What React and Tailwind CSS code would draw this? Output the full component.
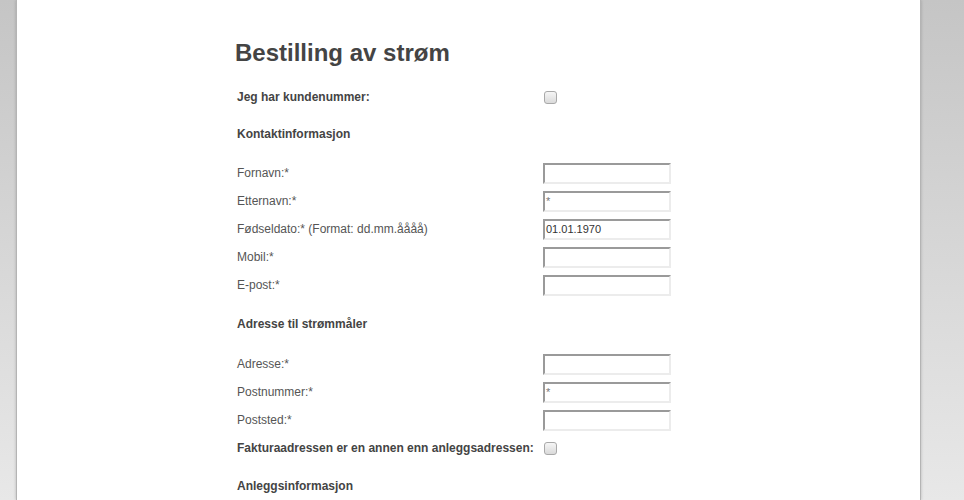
import React from 'react';

const font = { fontFamily: '"Liberation Sans", Arial, sans-serif' };

function TextInput({ value, hint }) {
  return (
    <div className="w-[128px] h-[21px] border-2 border-t-[#9a9a9a] border-l-[#9a9a9a] border-b-[#ececec] border-r-[#ececec] bg-white flex items-center px-[1px]">
      {value && <span className="text-[11px] text-[#333] leading-none">{value}</span>}
      {hint && <span className="text-[11px] text-[#777] leading-none self-start mt-[3px]">*</span>}
    </div>
  );
}

function Checkbox() {
  return (
    <span className="ml-[1px] block w-[13px] h-[13px] rounded-[3px] border border-[#a9a9a9] bg-gradient-to-b from-[#f6f6f6] to-[#dadada]" />
  );
}

function FieldRow({ label, value, hint }) {
  return (
    <div className="flex items-center h-[28px]">
      <span className="w-[306px] text-[12px] text-[#555]">{label}</span>
      <TextInput value={value} hint={hint} />
    </div>
  );
}

function CheckRow({ label }) {
  return (
    <div className="flex items-center h-[28px]">
      <span className="w-[306px] text-[12px] font-bold text-[#444] pr-2 whitespace-nowrap">{label}</span>
      <Checkbox />
    </div>
  );
}

function Heading({ children, className }) {
  return (
    <div className={`flex items-center h-[28px] text-[12px] font-bold text-[#444] ${className}`}>
      {children}
    </div>
  );
}

export default function App() {
  return (
    <div className="h-[500px] overflow-hidden bg-gradient-to-b from-[#c5c5c5] to-[#e8e8e8] pl-[16px] w-[964px]" style={font}>
      <div className="w-[905px] h-full bg-white border-x border-[#b4b4b4] shadow-[0_0_3px_rgba(0,0,0,0.2)]">
        <div className="ml-[220px] pt-[39px]">
          <h1 className="h-[28px] flex items-center text-[24px] font-bold text-[#444] -ml-[2px]">
            Bestilling av strøm
          </h1>
          <div className="mt-[16px]">
            <CheckRow label="Jeg har kundenummer:" />
          </div>
          <Heading className="mt-[9px] mb-[11px]">Kontaktinformasjon</Heading>
          <FieldRow label="Fornavn:*" />
          <FieldRow label="Etternavn:*" hint />
          <FieldRow label="Fødseldato:* (Format: dd.mm.åååå)" value="01.01.1970" />
          <FieldRow label="Mobil:*" />
          <FieldRow label="E-post:*" />
          <Heading className="mt-[11px] mb-[12px]">Adresse til strømmåler</Heading>
          <FieldRow label="Adresse:*" />
          <FieldRow label="Postnummer:*" hint />
          <FieldRow label="Poststed:*" />
          <CheckRow label="Fakturaadressen er en annen enn anleggsadressen:" />
          <Heading className="mt-[10px]">Anleggsinformasjon</Heading>
        </div>
      </div>
    </div>
  );
}
